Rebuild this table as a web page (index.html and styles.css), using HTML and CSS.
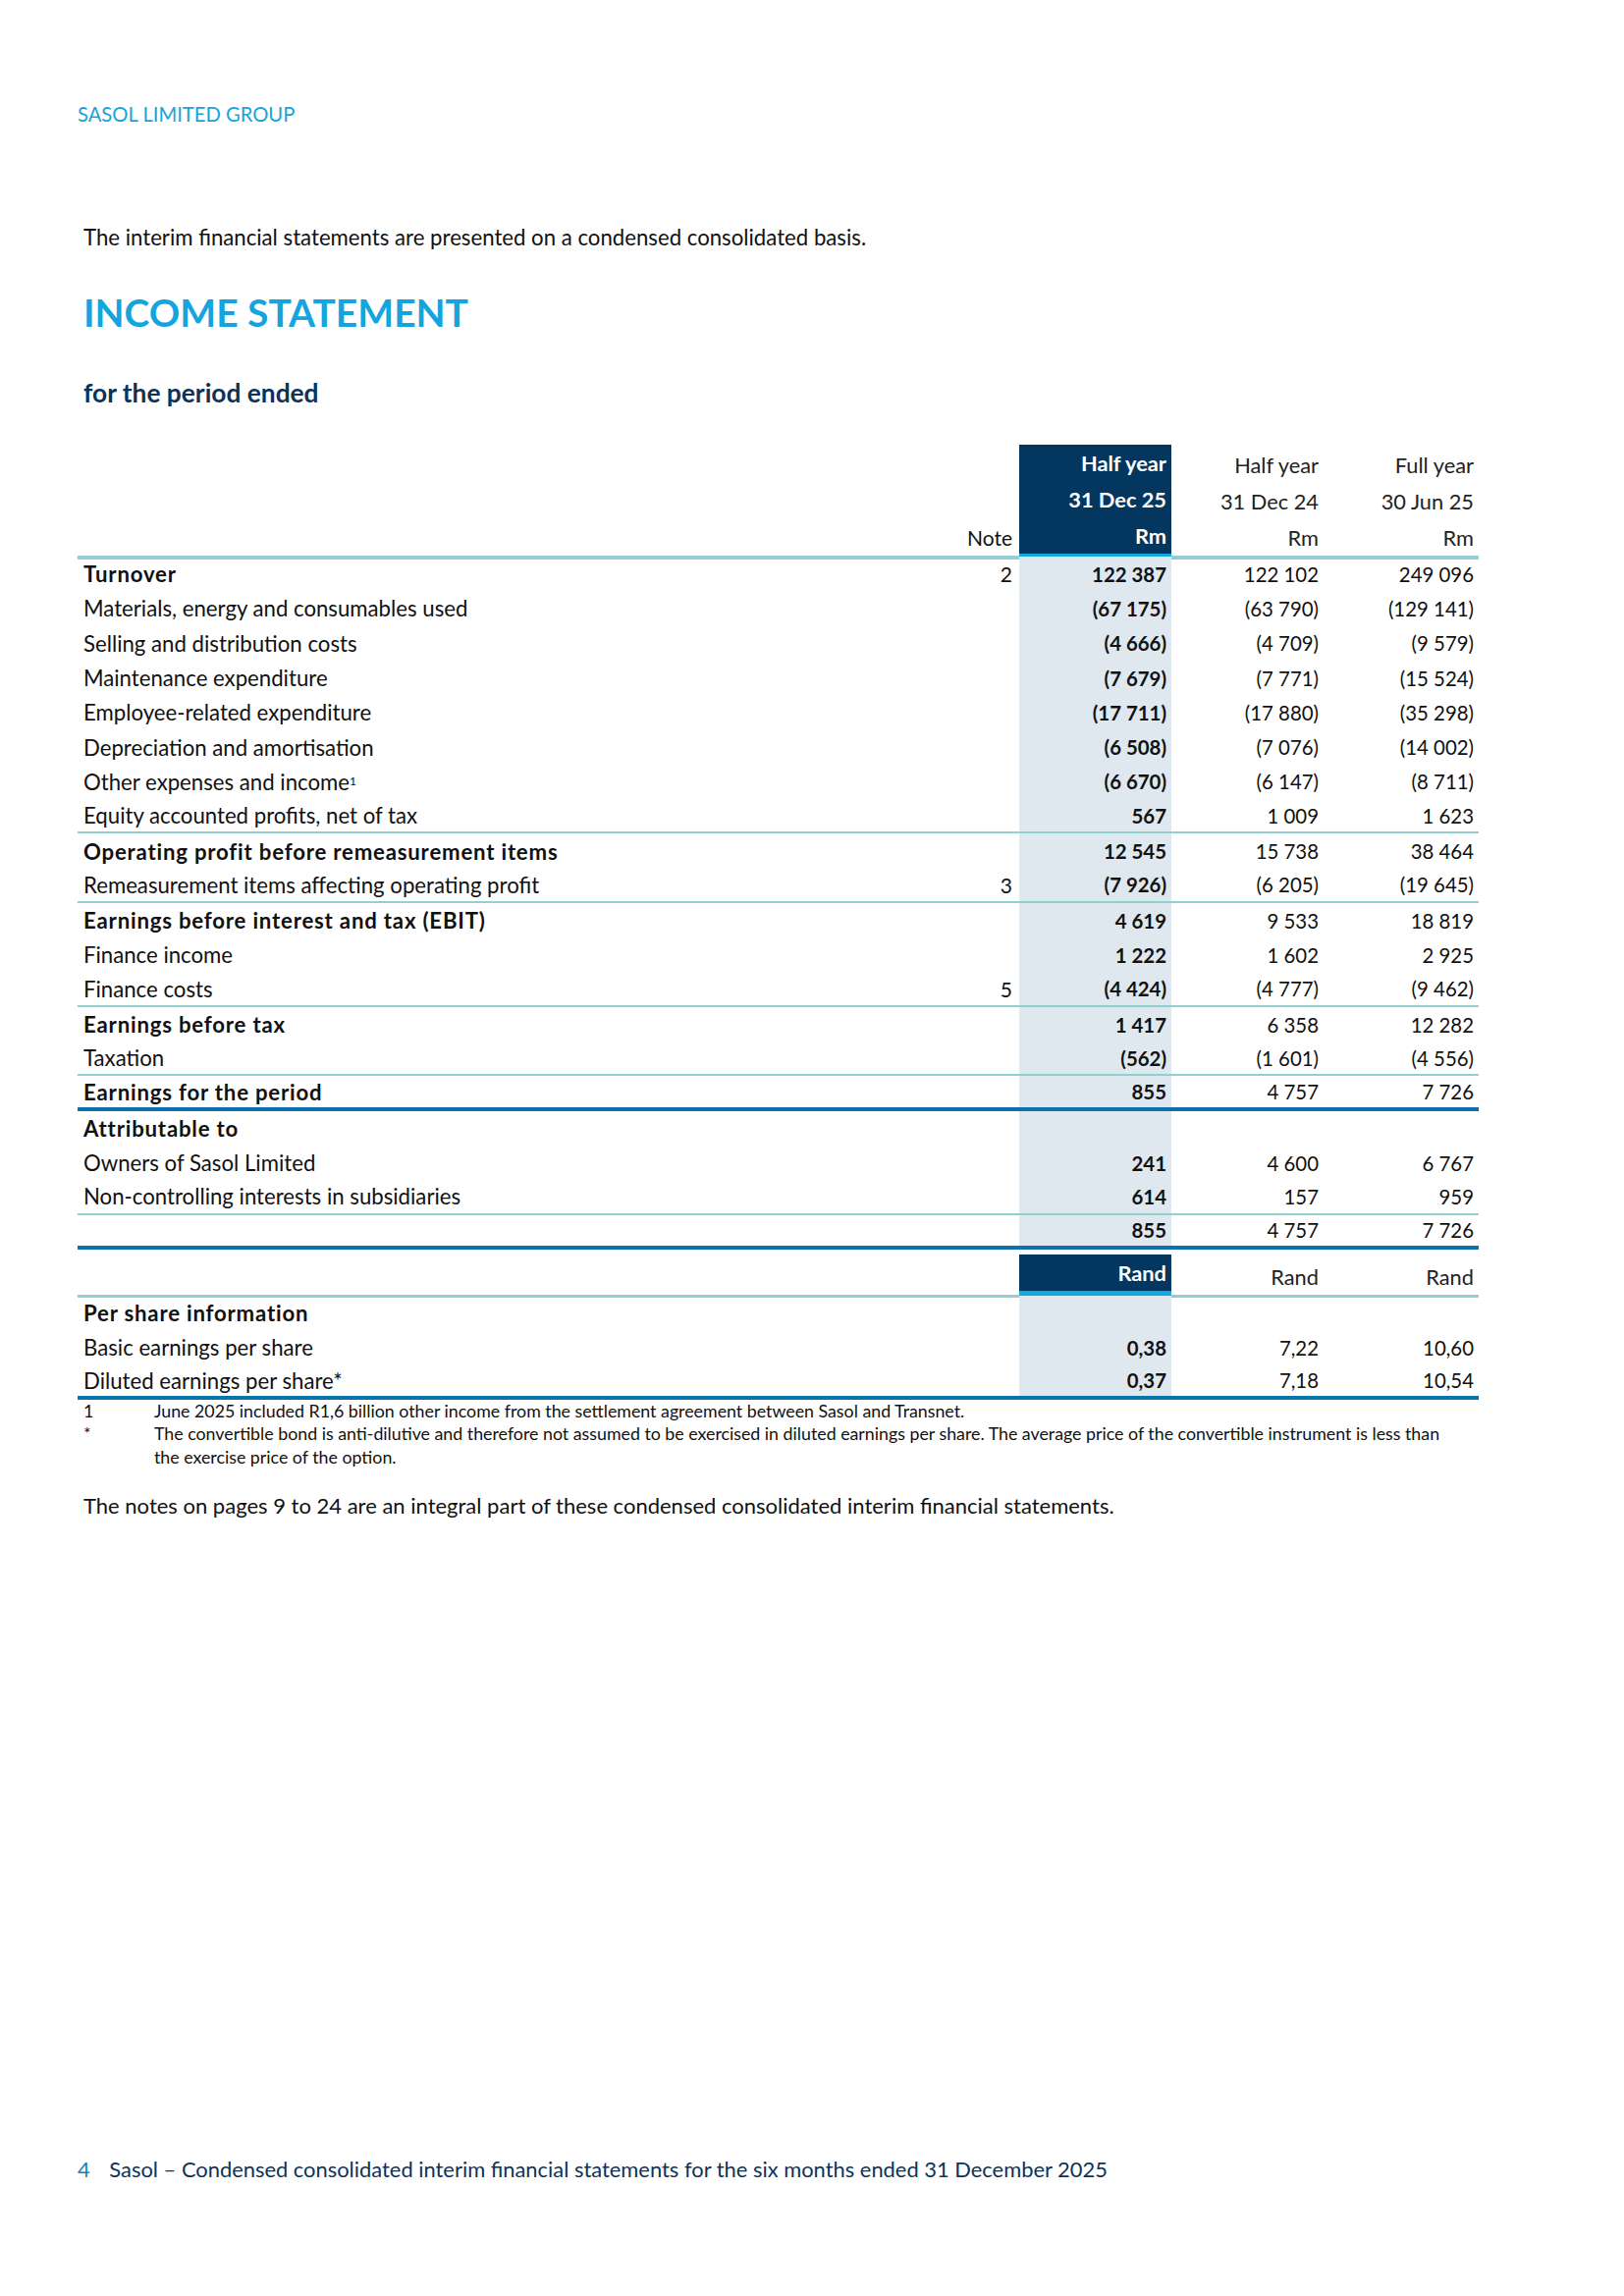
FILE: index.html
```html
<!DOCTYPE html>
<html lang="en">
<head>
    <meta charset="UTF-8">
    <title>Income Statement - Sasol</title>
    <link rel="stylesheet" href="styles.css">
</head>
<body>
    <div class="page">
        <div class="running-head">SASOL LIMITED GROUP</div>

        <p class="intro">The interim financial statements are presented on a condensed consolidated basis.</p>

        <h1>INCOME STATEMENT</h1>
        <h2 class="subtitle">for the period ended</h2>

        <div class="statement">
            <!-- Column headings -->
            <div class="row head">
                <div class="label"></div>
                <div class="note">Note</div>
                <div class="num current">Half year<br>31 Dec 25<br>Rm</div>
                <div class="num">Half year<br>31 Dec 24<br>Rm</div>
                <div class="num">Full year<br>30 Jun 25<br>Rm</div>
            </div>

            <div class="row bold">
                <div class="label">Turnover</div>
                <div class="note">2</div>
                <div class="num current">122 387</div>
                <div class="num">122 102</div>
                <div class="num">249 096</div>
            </div>
            <div class="row">
                <div class="label">Materials, energy and consumables used</div>
                <div class="note"></div>
                <div class="num current">(67 175)</div>
                <div class="num">(63 790)</div>
                <div class="num">(129 141)</div>
            </div>
            <div class="row">
                <div class="label">Selling and distribution costs</div>
                <div class="note"></div>
                <div class="num current">(4 666)</div>
                <div class="num">(4 709)</div>
                <div class="num">(9 579)</div>
            </div>
            <div class="row">
                <div class="label">Maintenance expenditure</div>
                <div class="note"></div>
                <div class="num current">(7 679)</div>
                <div class="num">(7 771)</div>
                <div class="num">(15 524)</div>
            </div>
            <div class="row">
                <div class="label">Employee-related expenditure</div>
                <div class="note"></div>
                <div class="num current">(17 711)</div>
                <div class="num">(17 880)</div>
                <div class="num">(35 298)</div>
            </div>
            <div class="row">
                <div class="label">Depreciation and amortisation</div>
                <div class="note"></div>
                <div class="num current">(6 508)</div>
                <div class="num">(7 076)</div>
                <div class="num">(14 002)</div>
            </div>
            <div class="row">
                <div class="label">Other expenses and income<sup>1</sup></div>
                <div class="note"></div>
                <div class="num current">(6 670)</div>
                <div class="num">(6 147)</div>
                <div class="num">(8 711)</div>
            </div>
            <div class="row rule">
                <div class="label">Equity accounted profits, net of tax</div>
                <div class="note"></div>
                <div class="num current">567</div>
                <div class="num">1 009</div>
                <div class="num">1 623</div>
            </div>
            <div class="row bold">
                <div class="label">Operating profit before remeasurement items</div>
                <div class="note"></div>
                <div class="num current">12 545</div>
                <div class="num">15 738</div>
                <div class="num">38 464</div>
            </div>
            <div class="row rule">
                <div class="label">Remeasurement items affecting operating profit</div>
                <div class="note">3</div>
                <div class="num current">(7 926)</div>
                <div class="num">(6 205)</div>
                <div class="num">(19 645)</div>
            </div>
            <div class="row bold">
                <div class="label">Earnings before interest and tax (EBIT)</div>
                <div class="note"></div>
                <div class="num current">4 619</div>
                <div class="num">9 533</div>
                <div class="num">18 819</div>
            </div>
            <div class="row">
                <div class="label">Finance income</div>
                <div class="note"></div>
                <div class="num current">1 222</div>
                <div class="num">1 602</div>
                <div class="num">2 925</div>
            </div>
            <div class="row rule">
                <div class="label">Finance costs</div>
                <div class="note">5</div>
                <div class="num current">(4 424)</div>
                <div class="num">(4 777)</div>
                <div class="num">(9 462)</div>
            </div>
            <div class="row bold">
                <div class="label">Earnings before tax</div>
                <div class="note"></div>
                <div class="num current">1 417</div>
                <div class="num">6 358</div>
                <div class="num">12 282</div>
            </div>
            <div class="row rule">
                <div class="label">Taxation</div>
                <div class="note"></div>
                <div class="num current">(562)</div>
                <div class="num">(1 601)</div>
                <div class="num">(4 556)</div>
            </div>
            <div class="row bold total">
                <div class="label">Earnings for the period</div>
                <div class="note"></div>
                <div class="num current">855</div>
                <div class="num">4 757</div>
                <div class="num">7 726</div>
            </div>
            <div class="row bold">
                <div class="label">Attributable to</div>
                <div class="note"></div>
                <div class="num current"></div>
                <div class="num"></div>
                <div class="num"></div>
            </div>
            <div class="row">
                <div class="label">Owners of Sasol Limited</div>
                <div class="note"></div>
                <div class="num current">241</div>
                <div class="num">4 600</div>
                <div class="num">6 767</div>
            </div>
            <div class="row rule">
                <div class="label">Non-controlling interests in subsidiaries</div>
                <div class="note"></div>
                <div class="num current">614</div>
                <div class="num">157</div>
                <div class="num">959</div>
            </div>
            <div class="row total">
                <div class="label"></div>
                <div class="note"></div>
                <div class="num current">855</div>
                <div class="num">4 757</div>
                <div class="num">7 726</div>
            </div>

            <!-- Per share block -->
            <div class="row head unit">
                <div class="label"></div>
                <div class="note"></div>
                <div class="num current">Rand</div>
                <div class="num">Rand</div>
                <div class="num">Rand</div>
            </div>
            <div class="row bold">
                <div class="label">Per share information</div>
                <div class="note"></div>
                <div class="num current"></div>
                <div class="num"></div>
                <div class="num"></div>
            </div>
            <div class="row">
                <div class="label">Basic earnings per share</div>
                <div class="note"></div>
                <div class="num current">0,38</div>
                <div class="num">7,22</div>
                <div class="num">10,60</div>
            </div>
            <div class="row total">
                <div class="label">Diluted earnings per share*</div>
                <div class="note"></div>
                <div class="num current">0,37</div>
                <div class="num">7,18</div>
                <div class="num">10,54</div>
            </div>
        </div>

        <div class="footnotes">
            <div class="footnote">
                <span class="mark">1</span>
                <span>June 2025 included R1,6 billion other income from the settlement agreement between Sasol and Transnet.</span>
            </div>
            <div class="footnote">
                <span class="mark">*</span>
                <span>The convertible bond is anti-dilutive and therefore not assumed to be exercised in diluted earnings per share. The average price of the convertible instrument is less than the exercise price of the option.</span>
            </div>
        </div>

        <p class="notes">The notes on pages 9 to 24 are an integral part of these condensed consolidated interim financial statements.</p>

        <div class="footer">
            <span class="page-no">4</span>
            <span>Sasol – Condensed consolidated interim financial statements for the six months ended 31 December 2025</span>
        </div>
    </div>
</body>
</html>
```

FILE: styles.css
```css
* {
    margin: 0;
    padding: 0;
    box-sizing: border-box;
}

body {
    font-family: Lato, "Open Sans", sans-serif;
    color: #111;
    background: white;
}

.page {
    width: 1654px;
    min-height: 2339px;
    padding: 104px 148px 115px 79px;
    display: flex;
    flex-direction: column;
}

.running-head {
    color: #1aa3d8;
    font-size: 20.2px;
    line-height: 24px;
}

.intro {
    margin-top: 102px;
    padding-left: 6px;
    font-size: 22.2px;
    line-height: 24px;
}

h1 {
    margin-top: 39px;
    padding-left: 6px;
    color: #14a4de;
    font-size: 39px;
    font-weight: 700;
    line-height: 50px;
}

.subtitle {
    margin-top: 41px;
    padding-left: 6px;
    color: #0d3358;
    font-size: 26.3px;
    font-weight: 700;
    line-height: 32px;
}

/* Statement table */
.statement {
    margin-top: 37px;
    font-size: 20.4px;
}

.row {
    display: grid;
    grid-template-columns: 879px 80px 155px 155px 158px;
    height: 35.3px;
}

.row > div {
    display: flex;
    align-items: center;
    white-space: nowrap;
}

.label {
    padding-left: 6px;
    font-size: 22.2px;
}

.note {
    justify-content: flex-end;
    padding-right: 7px;
    font-size: 21px;
}

.num {
    justify-content: flex-end;
    padding-right: 5px;
}

.num.current {
    background: #dfe8ef;
    font-weight: 700;
}

.bold .label {
    font-weight: 700;
    letter-spacing: 0.8px;
}

.rule {
    border-bottom: 2px solid #92cfd0;
}

.total {
    border-bottom: 4px solid #0b72ad;
}

sup {
    font-size: 12px;
    line-height: 0;
    vertical-align: 8px;
}

/* heading rows with navy box over the current period */
.row.head {
    height: 114px;
    align-items: end;
}

.row.head > div {
    align-self: stretch;
    align-items: flex-end;
    line-height: 36px;
    text-align: right;
    border-bottom: 4px solid #92cfd0;
}

.row.head .num {
    color: #222;
    font-size: 21.8px;
    line-height: 37px;
}

.row.head .num.current {
    background: #03375f;
    color: white;
    border-bottom: 6px solid #12a8e0;
}

.row.head.unit {
    height: 42px;
    margin-top: 5px;
}

.row.head.unit > div {
    border-bottom-width: 3px;
}

.row.head.unit .num.current {
    border-bottom-width: 7px;
}

/* footnotes */
.footnotes {
    font-size: 17.8px;
    line-height: 23.5px;
    padding-left: 6px;
    padding-right: 21px;
}

.footnote {
    display: flex;
}

.footnote .mark {
    flex: 0 0 72px;
}

.notes {
    margin-top: 25px;
    padding-left: 6px;
    font-size: 22px;
    line-height: 26px;
}

.footer {
    margin-top: auto;
    color: #0d3358;
    font-size: 21.9px;
    line-height: 28px;
}

.footer .page-no {
    color: #1382b8;
    margin-right: 14px;
}
```
